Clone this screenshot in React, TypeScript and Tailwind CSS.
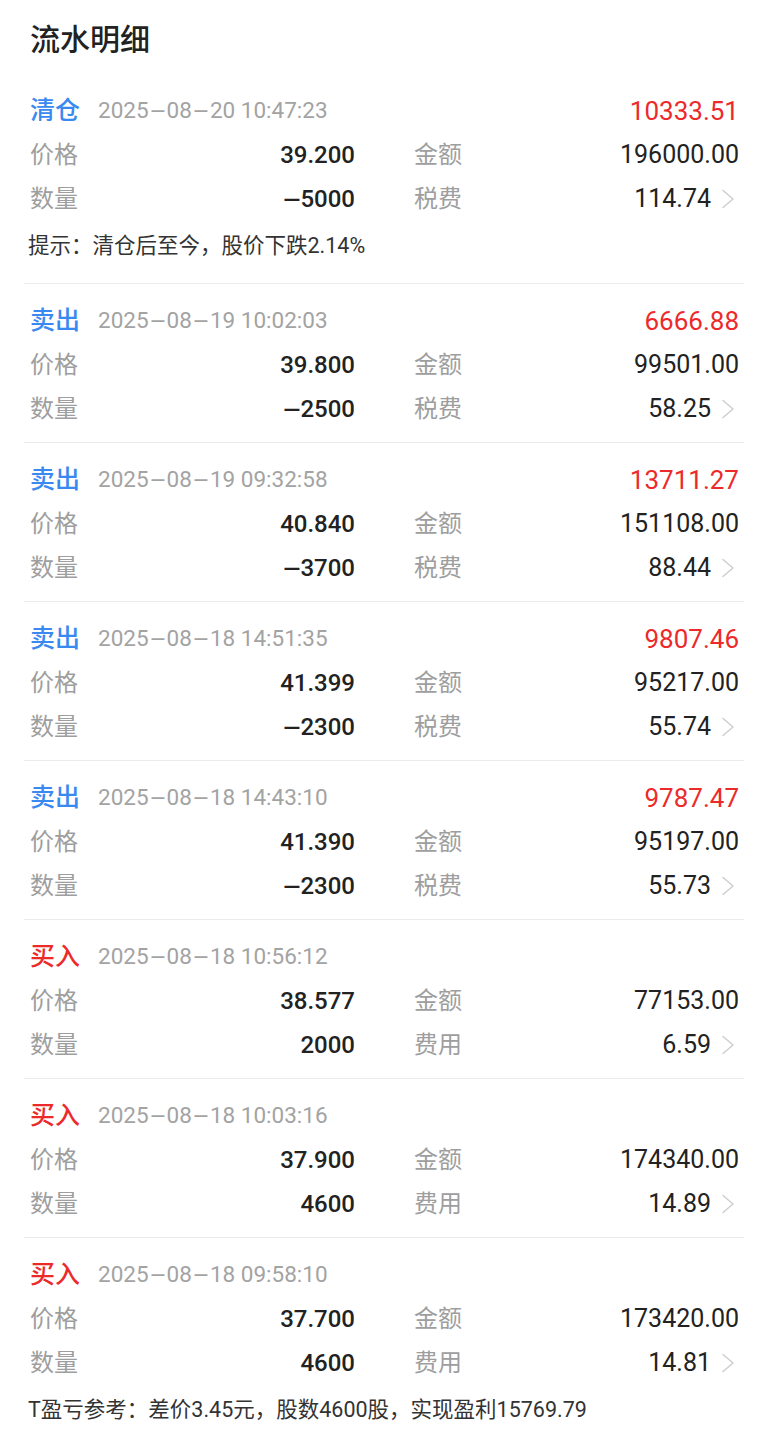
import React from 'react';

type Entry = {
  type: '清仓' | '卖出' | '买入';
  time: string;
  profit?: string;
  price: string;
  amount: string;
  qty: string;
  feeLabel: string;
  fee: string;
  note?: string;
};

const entries: Entry[] = [
  { type: '清仓', time: '2025-08-20 10:47:23', profit: '10333.51', price: '39.200', amount: '196000.00', qty: '-5000', feeLabel: '税费', fee: '114.74', note: '提示：清仓后至今，股价下跌2.14%' },
  { type: '卖出', time: '2025-08-19 10:02:03', profit: '6666.88', price: '39.800', amount: '99501.00', qty: '-2500', feeLabel: '税费', fee: '58.25' },
  { type: '卖出', time: '2025-08-19 09:32:58', profit: '13711.27', price: '40.840', amount: '151108.00', qty: '-3700', feeLabel: '税费', fee: '88.44' },
  { type: '卖出', time: '2025-08-18 14:51:35', profit: '9807.46', price: '41.399', amount: '95217.00', qty: '-2300', feeLabel: '税费', fee: '55.74' },
  { type: '卖出', time: '2025-08-18 14:43:10', profit: '9787.47', price: '41.390', amount: '95197.00', qty: '-2300', feeLabel: '税费', fee: '55.73' },
  { type: '买入', time: '2025-08-18 10:56:12', price: '38.577', amount: '77153.00', qty: '2000', feeLabel: '费用', fee: '6.59' },
  { type: '买入', time: '2025-08-18 10:03:16', price: '37.900', amount: '174340.00', qty: '4600', feeLabel: '费用', fee: '14.89' },
  { type: '买入', time: '2025-08-18 09:58:10', price: '37.700', amount: '173420.00', qty: '4600', feeLabel: '费用', fee: '14.81', note: 'T盈亏参考：差价3.45元，股数4600股，实现盈利15769.79' },
];

// the app font draws "-" as a long dash; widen it without changing the text
const Dashed = ({ text, w = 'w-[16px]' }: { text: string; w?: string }) => (
  <>
    {text.split('-').map((part, i) => (
      <React.Fragment key={i}>
        {i > 0 && <span className={`inline-block ${w} scale-x-[2.4] text-center`}>-</span>}
        {part}
      </React.Fragment>
    ))}
  </>
);

const Chevron = () => (
  <svg width="14" height="20" viewBox="0 0 14 20" className="ml-[10px] mr-[4px]" fill="none">
    <path d="M2 1.5L12 10L2 18.5" stroke="#cdcdcd" strokeWidth="1.4" strokeLinecap="round" strokeLinejoin="round" />
  </svg>
);

const Cell = ({ label, value, strong, chevron }: { label: string; value: string; strong?: boolean; chevron?: boolean }) => (
  <div className="flex h-[44px] items-center justify-between">
    <span className="text-[24px] text-[#9e9e9e]">{label}</span>
    <span className="flex items-center">
      <span className={`text-[#222] ${strong ? 'text-[24px] font-medium' : 'text-[25px]'}`}>
        <Dashed text={value} />
      </span>
      {chevron && <Chevron />}
    </span>
  </div>
);

const Row = ({ e, first }: { e: Entry; first: boolean }) => {
  const typeColor = e.type === '买入' ? 'text-[#ec2a2a]' : 'text-[#3a89f0]';
  return (
    <div className={`pt-[15px] ${e.note ? 'pb-[15px]' : 'pb-[11px]'} ${first ? '' : 'border-t border-[#ebebeb]'}`}>
      <div className="flex h-[44px] items-center justify-between pl-[6px] pr-[5px]">
        <div className="flex items-center">
          <span className={`text-[25px] font-medium ${typeColor}`}>{e.type}</span>
          <span className="ml-[18px] text-[22.5px] text-[#a3a3a3]">
            <Dashed text={e.time} w="w-[18px]" />
          </span>
        </div>
        {e.profit && <span className="text-[26px] text-[#ec2a2a]">{e.profit}</span>}
      </div>
      <div className="grid grid-cols-2 gap-x-[59px] pl-[6px] pr-[5px]">
        <Cell label="价格" value={e.price} strong />
        <Cell label="金额" value={e.amount} />
        <Cell label="数量" value={e.qty} strong />
        <Cell label={e.feeLabel} value={e.fee} chevron />
      </div>
      {e.note && (
        <div className="mt-[3px] h-[44px] leading-[44px] pl-[4px] text-[21.5px] text-[#333]">{e.note}</div>
      )}
    </div>
  );
};

export default function App() {
  return (
    <div
      className="min-h-screen w-[768px] bg-white"
      style={{ fontFamily: 'Roboto, "Noto Sans CJK SC", "Noto Sans", sans-serif' }}
    >
      <div className="px-[30px] pt-[20px] pb-[14px] text-[30px] font-medium leading-[40px] text-[#222]">流水明细</div>
      <div className="px-6">
        {entries.map((e, i) => (
          <Row key={i} e={e} first={i === 0} />
        ))}
      </div>
    </div>
  );
}
